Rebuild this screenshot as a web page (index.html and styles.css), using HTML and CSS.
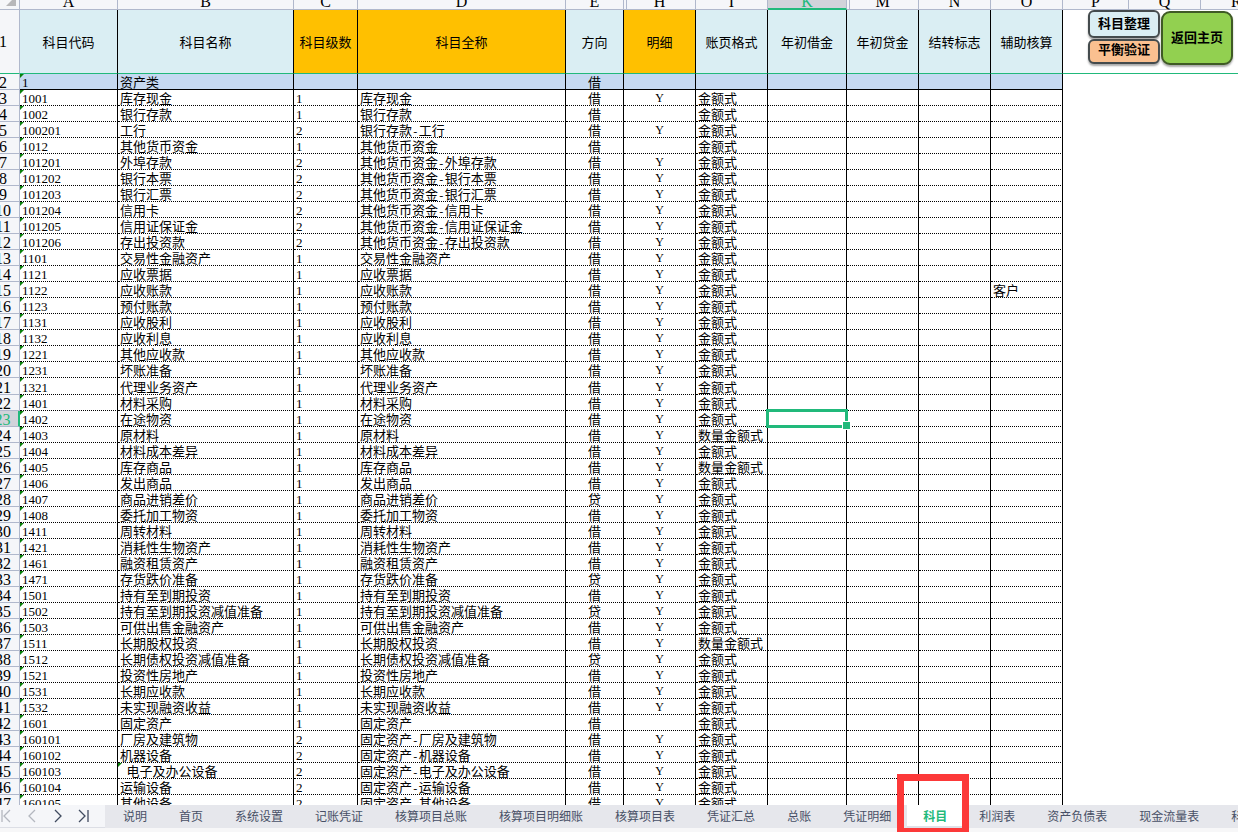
FILE: index.html
```html
<!DOCTYPE html>
<html lang="zh-CN">
<head>
<meta charset="utf-8">
<title>科目</title>
<link rel="stylesheet" href="styles.css">
</head>
<body>
<main class="viewport">
  <table class="sheet">
    <colgroup>
      <col class="w-head"><col class="w-a"><col class="w-b"><col class="w-c"><col class="w-d"><col class="w-e">
      <col class="w-std"><col class="w-std"><col class="w-k"><col class="w-std"><col class="w-std"><col class="w-std">
      <col class="w-p"><col class="w-std"><col>
    </colgroup>
    <thead>
      <tr class="letters">
        <th class="corner"><svg class="corner-mark" viewBox="0 0 10 10" width="10" height="10" aria-hidden="true"><path d="M10 0V10H0Z" fill="#b7b7b9"/></svg></th>
        <th>A</th><th>B</th><th>C</th><th>D</th><th>E</th><th class="gap">H</th><th>I</th><th class="current">K</th><th class="gap">M</th><th>N</th><th>O</th><th>P</th><th>Q</th><th class="last">R</th>
      </tr>
      <tr class="titles">
        <th class="num">1</th>
        <th>科目代码</th><th>科目名称</th><th class="gold">科目级数</th><th class="gold">科目全称</th><th>方向</th><th class="gold">明细</th><th>账页格式</th><th>年初借金</th><th>年初贷金</th><th>结转标志</th><th>辅助核算</th>
        <td class="tools" colspan="3">
          <div class="buttons">
            <div class="stack">
              <button class="btn blue" type="button">科目整理</button>
              <button class="btn peach" type="button">平衡验证</button>
            </div>
            <button class="btn green" type="button">返回主页</button>
          </div>
        </td>
      </tr>
    </thead>
    <tbody id="rows"></tbody>
  </table>
</main>
<footer class="tabbar">
  <div class="pager">
    <button type="button" class="dim" aria-label="第一张"><svg viewBox="0 0 12 14" width="12" height="14"><path d="M2 1V13M10 1L4 7L10 13"/></svg></button>
    <button type="button" class="dim" aria-label="上一张"><svg viewBox="0 0 12 14" width="12" height="14"><path d="M9 1L3 7L9 13"/></svg></button>
    <button type="button" aria-label="下一张"><svg viewBox="0 0 12 14" width="12" height="14"><path d="M3 1L9 7L3 13"/></svg></button>
    <button type="button" aria-label="最后一张"><svg viewBox="0 0 12 14" width="12" height="14"><path d="M1 1L7 7L1 13M10 1V13"/></svg></button>
  </div>
  <nav class="tabs">
    <button type="button">说明</button><button type="button">首页</button><button type="button">系统设置</button><button type="button">记账凭证</button><button type="button">核算项目总账</button><button type="button">核算项目明细账</button><button type="button">核算项目表</button><button type="button">凭证汇总</button><button type="button">总账</button><button type="button">凭证明细</button><button type="button" class="active">科目</button><button type="button">利润表</button><button type="button">资产负债表</button><button type="button">现金流量表</button><button type="button">科</button>
  </nav>
</footer>
<script src="app.js"></script>
</body>
</html>
```
FILE: styles.css
```css
* { box-sizing: border-box; }

body {
  margin: 0;
  height: 100vh;
  overflow: hidden;
  display: flex;
  flex-direction: column;
  background: #f7f7f8;
  color: #000;
  font-family: "Liberation Serif", "Noto Sans CJK SC", serif;
  font-size: 13px;
}

button { font: inherit; color: inherit; }

.viewport {
  flex: 1;
  min-height: 0;
  overflow: hidden;
  background: #fff;
}

/* The sheet is scrolled slightly under its top-left edge. */
.sheet {
  width: calc(100% + 13px);
  margin: -12px 0 0 -13px;
  table-layout: fixed;
  border-collapse: separate;
  border-spacing: 0;
}

.w-head { width: 33px; }
.w-a { width: 98px; }
.w-b { width: 176px; }
.w-c { width: 64px; }
.w-d { width: 208px; }
.w-e { width: 58px; }
.w-k { width: 79px; }
.w-p { width: 66px; }
.w-std { width: 72px; }

.sheet th, .sheet td {
  position: relative;
  padding: 0;
  font-weight: 400;
  white-space: nowrap;
}

.letters th {
  height: 22px;
  vertical-align: bottom;
  line-height: 14px;
  font-size: 16px;
  background: #f5f6f9;
  border-right: 1px solid #b0b8cc;
  border-bottom: 1px solid #b0b8cc;
}

.sheet .letters .last {
  padding-left: 30px;
  border-right: 0;
  overflow: hidden;
}

.letters .gap::before {
  content: "";
  position: absolute;
  left: 2px;
  top: 0;
  bottom: 0;
  width: 1px;
  background: #b0b8cc;
}

.letters .current {
  line-height: 12px;
  color: #21b97b;
  background: #d1d3da;
  border-bottom: 2px solid #21b97b;
}

.corner-mark {
  position: absolute;
  right: 3px;
  bottom: 3px;
}

.sheet .num {
  font-size: 16px;
  background: #f5f6f9;
  border-right: 1px solid #b0b8cc;
  border-bottom: 1px solid #b0b8cc;
}

.sheet tbody .num {
  padding-top: 2px;
  line-height: 13px;
}

.titles th {
  height: 64px;
  background: #daeef3;
  border-right: 1px solid #000;
  border-bottom: 1px solid #21b97b;
}

.titles .gold { background: #ffc000; }
.sheet .titles .num, .titles .tools { border-bottom: 1px solid #21b97b; }

.titles .tools {
  vertical-align: top;
  overflow: hidden;
}

.buttons {
  display: flex;
  gap: 1px;
  padding-left: 25px;
}

.stack {
  display: flex;
  flex-direction: column;
  gap: 1px;
}

.btn {
  width: 72px;
  padding: 0 0 3px;
  font-weight: 700;
  border: 2px solid #444b4d;
  border-radius: 6px;
  box-shadow: 0 2px 2px #aaa;
}

.blue { height: 28px; background: #daeef3; }
.peach { height: 25px; background: #fac090; line-height: 18px; }
.green { height: 54px; margin-top: 1px; background: #92d050; border-color: #3f5a25; border-radius: 9px; }

tbody tr { height: 16px; }
tbody .tall { height: 17px; }

.sheet tbody td {
  padding-top: 2px;
  line-height: 13px;
  border-right: 1px solid #000;
  border-bottom: 1px dotted #000;
}

.sheet tbody .text { padding-left: 2px; }
tbody .mid { text-align: center; }
tbody .flag { text-align: center; font-size: 12px; }

.sheet .category td {
  background: #c5d9f1;
  border-bottom: 1px solid #000;
}

.sheet tbody tr .blank {
  background: #fff;
  border: 0;
}

.marked::before {
  content: "";
  position: absolute;
  left: 0;
  top: 0;
  border-top: 4px solid #0a800a;
  border-right: 4px solid transparent;
}

.dash {
  font-family: "Liberation Mono", monospace;
  font-size: 11px;
  line-height: 0;
}

.sheet .num.current {
  color: #21b97b;
  background: #d1d3da;
  border-right: 2px solid #21b97b;
}

.selection {
  position: absolute;
  z-index: 1;
  left: -2px;
  right: -2px;
  top: -2px;
  bottom: -2px;
  border: 3px solid #21b97b;
}

.selection::after {
  content: "";
  position: absolute;
  right: -6px;
  bottom: -5px;
  width: 7px;
  height: 7px;
  background: #21b97b;
  border: 1px solid #fff;
}

.tabbar {
  display: flex;
  height: 23px;
  margin-bottom: 4px;
  background: #e6e7ec;
  font-family: "Noto Sans CJK SC", sans-serif;
  font-size: 12px;
  color: #485066;
}

.pager {
  flex: none;
  display: flex;
  gap: 14px;
  width: 105px;
  background: #f5f6f9;
  border-bottom: 1px solid #dcdee5;
}

.pager button {
  display: flex;
  align-items: center;
  padding: 0;
  border: 0;
  background: none;
}

.pager svg { fill: none; stroke: #414b60; stroke-width: 1.3; }
.pager .dim svg { stroke: #b4b7bf; }

.tabs {
  flex: 1;
  min-width: 0;
  display: flex;
  padding-left: 2px;
  white-space: nowrap;
  overflow-x: clip;
}

.tabs button {
  position: relative;
  flex: none;
  padding: 0 16px 2px;
  border: 0;
  background: none;
  line-height: 20px;
}

.tabs .active {
  padding-bottom: 0;
  color: #21b97b;
  font-weight: 700;
  background: #fff;
  border-bottom: 2px solid #dfe1e8;
}

.tabs .active::after {
  content: "";
  position: absolute;
  z-index: 2;
  left: -10px;
  right: -6px;
  top: -31px;
  bottom: -6px;
  border: 7px solid #fc3939;
  border-bottom-width: 4px;
}
```
FILE: app.js
```js
// Each line: code | name | level | full name (blank = same as name) | direction | detail | page format | auxiliary
const accounts = `
1001|库存现金|1||借|Y
1002|银行存款|1||借|
100201|工行|2|银行存款-工行|借|Y
1012|其他货币资金|1||借|
101201|外埠存款|2|其他货币资金-外埠存款|借|Y
101202|银行本票|2|其他货币资金-银行本票|借|Y
101203|银行汇票|2|其他货币资金-银行汇票|借|Y
101204|信用卡|2|其他货币资金-信用卡|借|Y
101205|信用证保证金|2|其他货币资金-信用证保证金|借|Y
101206|存出投资款|2|其他货币资金-存出投资款|借|Y
1101|交易性金融资产|1||借|Y
1121|应收票据|1||借|Y
1122|应收账款|1||借|Y||客户
1123|预付账款|1||借|Y
1131|应收股利|1||借|Y
1132|应收利息|1||借|Y
1221|其他应收款|1||借|Y
1231|坏账准备|1||借|Y
1321|代理业务资产|1||借|Y
1401|材料采购|1||借|Y
1402|在途物资|1||借|Y
1403|原材料|1||借|Y|数量金额式
1404|材料成本差异|1||借|Y
1405|库存商品|1||借|Y|数量金额式
1406|发出商品|1||借|Y
1407|商品进销差价|1||贷|Y
1408|委托加工物资|1||借|Y
1411|周转材料|1||借|Y
1421|消耗性生物资产|1||借|Y
1461|融资租赁资产|1||借|Y
1471|存货跌价准备|1||贷|Y
1501|持有至到期投资|1||借|Y
1502|持有至到期投资减值准备|1||贷|Y
1503|可供出售金融资产|1||借|Y
1511|长期股权投资|1||借|Y|数量金额式
1512|长期债权投资减值准备|1||贷|Y
1521|投资性房地产|1||借|Y
1531|长期应收款|1||借|Y
1532|未实现融资收益|1||借|Y
1601|固定资产|1||借|
160101|厂房及建筑物|2|固定资产-厂房及建筑物|借|Y
160102|机器设备|2|固定资产-机器设备|借|Y
160103|&nbsp;&nbsp;电子及办公设备|2|固定资产-电子及办公设备|借|Y
160104|运输设备|2|固定资产-运输设备|借|Y
160105|其他设备|2|固定资产-其他设备|借|Y`.trim().split("\n");

function row(number, values, rowClass, selected) {
  const [code, name, level, full, side, detail, format, aux] = values;
  const nameMark = name.startsWith("&nbsp;") ? " marked" : "";
  return `<tr class="${rowClass}"><th class="num${selected ? " current" : ""}">${number}</th>
    <td class="text marked">${code}</td><td class="text${nameMark}">${name}</td><td class="text">${level}</td>
    <td class="text">${full.replace("-", '<span class="dash">-</span>')}</td>
    <td class="mid">${side}</td><td class="flag">${detail}</td><td class="text">${format}</td>
    <td>${selected ? '<div class="selection"></div>' : ""}</td><td></td><td></td><td class="text">${aux}</td>
    <td class="blank" colspan="3"></td></tr>`;
}

let html = row(2, ["1", "资产类", "", "", "借", "", "", ""], "category", false);
accounts.forEach((line, i) => {
  const [code, name, level, full, side, detail, format, aux] = line.split("|");
  const number = i + 3;
  html += row(number, [code, name, level, full || name, side, detail, format || "金额式", aux || ""],
    number === 21 ? "tall" : "", number === 23);
});
document.getElementById("rows").innerHTML = html;
```
